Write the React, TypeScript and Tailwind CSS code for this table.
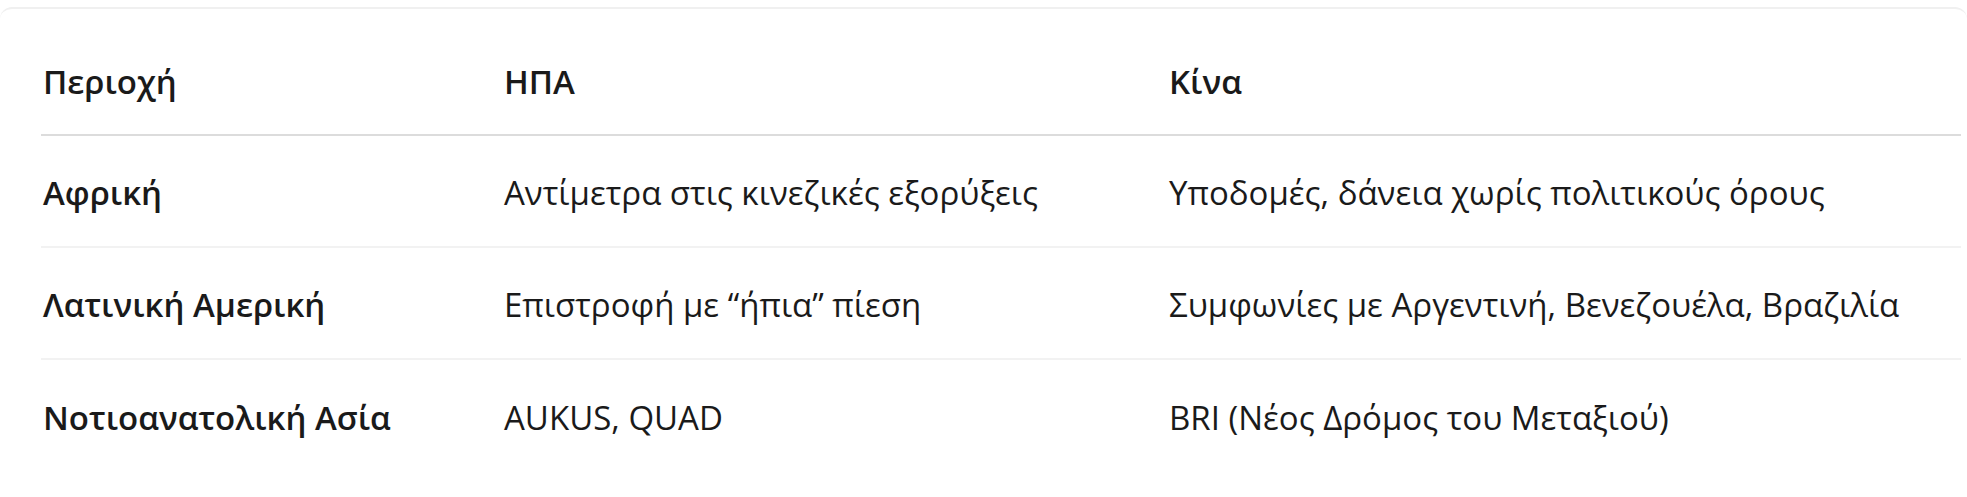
const rows = [
  {
    region: "Αφρική",
    usa: "Αντίμετρα στις κινεζικές εξορύξεις",
    china: "Υποδομές, δάνεια χωρίς πολιτικούς όρους",
  },
  {
    region: "Λατινική Αμερική",
    usa: "Επιστροφή με “ήπια” πίεση",
    china: "Συμφωνίες με Αργεντινή, Βενεζουέλα, Βραζιλία",
  },
  {
    region: "Νοτιοανατολική Ασία",
    usa: "AUKUS, QUAD",
    china: "BRI (Νέος Δρόμος του Μεταξιού)",
  },
];

export default function App() {
  return (
    <div
      className="h-[497px] w-full overflow-hidden bg-white pt-[7px] text-[#1a1a1a]"
      style={{ fontFamily: '"Open Sans", "Noto Sans", sans-serif' }}
    >
      <div className="h-[520px] rounded-t-xl border-t-2 border-[#f0f0f0] pl-[41px] pr-[6px] pt-[17px]">
        <div className="grid h-[110px] grid-cols-[461px_665px_1fr] items-center border-b-2 border-[#dcdcdc] pt-[4px] pl-[2px] text-[33px] font-semibold">
          <div>Περιοχή</div>
          <div>ΗΠΑ</div>
          <div>Κίνα</div>
        </div>
        {rows.map((row, i) => (
          <div
            key={row.region}
            className={`grid h-[112px] grid-cols-[461px_665px_1fr] items-center pt-[4px] pl-[2px] text-[33px] ${
              i < rows.length - 1 ? "border-b-2 border-[#f2f2f2]" : ""
            }`}
          >
            <div className="font-semibold">{row.region}</div>
            <div>{row.usa}</div>
            <div>{row.china}</div>
          </div>
        ))}
      </div>
    </div>
  );
}
